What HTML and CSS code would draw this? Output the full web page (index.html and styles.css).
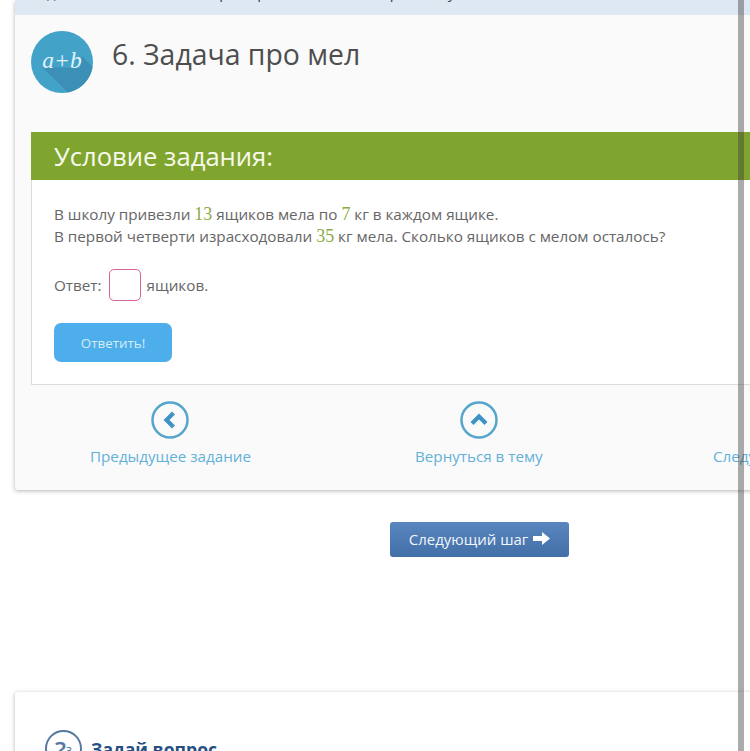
FILE: index.html
```html
<!DOCTYPE html>
<html lang="ru">

<head>
    <meta charset="UTF-8">
    <meta name="viewport" content="width=device-width, initial-scale=1.0">
    <title>Задача про мел</title>
    <link rel="stylesheet" href="styles.css">
</head>

<body>

    <div class="page">
        <!-- Task card -->
        <div class="card">
            <div class="top-band">
                <p>Задание составлено как пример к этой теме, все работы у нас.</p>
            </div>

            <div class="task-head">
                <svg class="task-logo" width="62" height="62" viewBox="0 0 62 62">
                    <circle cx="31" cy="31" r="31" fill="#42a2c8"></circle>
                    <path d="M11 36 L37 61.4 A31 31 0 0 0 61.6 36 L51 25 L49 37 Z" fill="#3c8fb6"></path>
                    <text class="logo-text" x="31" y="37" text-anchor="middle">a+b</text>
                </svg>
                <h1>6. Задача про мел</h1>
            </div>

            <div class="task-box">
                <h2>Условие задания:</h2>
                <div class="task-body">
                    <p>В школу привезли <span class="num">13</span> ящиков мела по <span class="num">7</span> кг в каждом ящике.<br>
                        В первой четверти израсходовали <span class="num">35</span> кг мела. Сколько ящиков с мелом осталось?</p>
                    <div class="answer-row">
                        <span>Ответ:</span>
                        <input class="answer-input" type="text">
                        <span>ящиков.</span>
                    </div>
                    <button class="answer-btn" type="button">Ответить!</button>
                </div>
            </div>

            <div class="task-nav">
                <a class="nav-link nav-prev" href="#">
                    <svg width="38" height="38" viewBox="0 0 38 38">
                        <circle cx="19" cy="19" r="17.5" fill="none" stroke="#56a5cb" stroke-width="2.5"></circle>
                        <path d="M22.5 12 L15.5 19 L22.5 26" fill="none" stroke="#3f93c4" stroke-width="4.2"></path>
                    </svg>
                    Предыдущее задание
                </a>
                <a class="nav-link nav-up" href="#">
                    <svg width="38" height="38" viewBox="0 0 38 38">
                        <circle cx="19" cy="19" r="17.5" fill="none" stroke="#56a5cb" stroke-width="2.5"></circle>
                        <path d="M12 22.5 L19 15.5 L26 22.5" fill="none" stroke="#3f93c4" stroke-width="4.2"></path>
                    </svg>
                    Вернуться в тему
                </a>
                <a class="nav-link nav-next" href="#">
                    <svg width="38" height="38" viewBox="0 0 38 38">
                        <circle cx="19" cy="19" r="17.5" fill="none" stroke="#56a5cb" stroke-width="2.5"></circle>
                        <path d="M15.5 12 L22.5 19 L15.5 26" fill="none" stroke="#3f93c4" stroke-width="4.2"></path>
                    </svg>
                    Следующее задание
                </a>
            </div>
        </div>

        <div class="next-step">
            <button class="next-btn" type="button">
                Следующий шаг
                <svg width="17" height="13" viewBox="0 0 17 13">
                    <path d="M0 4 H9 V0 L17 6.5 L9 13 V9 H0 Z" fill="#ffffff"></path>
                </svg>
            </button>
        </div>

        <!-- Question card -->
        <div class="card question-card">
            <div class="question-head">
                <span class="question-icon">?<small>з</small></span>
                <h3>Задай вопрос</h3>
            </div>
        </div>
    </div>

    <div class="scrollbar"></div>

</body>

</html>
```

FILE: styles.css
```css
html, body {
    margin: 0;
    padding: 0;
    height: 751px;
    overflow: hidden;
    background-color: #ffffff;
}

body {
    font-family: 'Open Sans', sans-serif;
    color: #555555;
    position: relative;
}

.page {
    width: 1000px;
    margin-left: 15px;
}

.card {
    background-color: #fafafa;
    border-radius: 3px;
    box-shadow: 0 1px 4px rgba(0, 0, 0, 0.3);
}

.top-band {
    height: 15px;
    background-color: #dde8f3;
    overflow: hidden;
    position: relative;
}

.top-band p {
    margin: -18px 0 0 15px;
    font-size: 15px;
    line-height: 20px;
    color: #444444;
    white-space: nowrap;
}

.task-head {
    display: flex;
    align-items: flex-start;
    padding: 16px 0 0 16px;
    height: 101px;
}

.task-logo {
    flex: none;
}

.logo-text {
    font-family: 'Liberation Serif', serif;
    font-style: italic;
    font-size: 23.5px;
    fill: #e4f2f8;
}

h1 {
    margin: 0 0 0 19px;
    font-size: 28.4px;
    font-weight: 400;
    line-height: 46px;
    color: #4e4e4e;
}

.task-box {
    margin-left: 16px;
    background-color: #ffffff;
    border: 1px solid #dcdcdc;
    border-top: none;
}

h2 {
    margin: 0 0 0 -1px;
    height: 48px;
    padding-left: 23px;
    background-color: #80a52f;
    color: #f6f9ec;
    font-size: 25.6px;
    font-weight: 400;
    line-height: 49px;
}

.task-body {
    padding: 23px 22px 22px;
    font-size: 15.25px;
    line-height: 22px;
    color: #666666;
}

.task-body p {
    margin: 0;
}

.num {
    font-family: 'Liberation Serif', serif;
    font-size: 18px;
    color: #8bab45;
}

.answer-row {
    display: flex;
    align-items: center;
    gap: 6px;
    margin-top: 22px;
}

.answer-input {
    width: 32px;
    height: 32px;
    box-sizing: border-box;
    margin-left: 1px;
    padding: 0;
    background-color: #ffffff;
    border: 1.5px solid #d5659b;
    border-radius: 5px;
}

.answer-btn {
    display: block;
    width: 118px;
    height: 39px;
    margin-top: 22px;
    padding: 0;
    background-color: #4daeeb;
    color: #d5ecf9;
    border: none;
    border-radius: 7px;
    font-family: 'Open Sans', sans-serif;
    font-size: 13.4px;
}

.task-nav {
    position: relative;
    height: 105px;
}

.nav-link {
    position: absolute;
    top: 16px;
    display: flex;
    flex-direction: column;
    align-items: center;
    gap: 6px;
    font-size: 15.2px;
    font-weight: 500;
    line-height: 22px;
    color: #62b1d8;
    text-decoration: none;
    white-space: nowrap;
}

.nav-prev {
    left: 75px;
}

.nav-up {
    left: 400px;
}

.nav-next {
    left: 698px;
}

.next-step {
    margin-top: 32px;
    padding-left: 375px;
}

.next-btn {
    display: flex;
    align-items: center;
    justify-content: center;
    gap: 5px;
    width: 179px;
    height: 35px;
    padding: 0 0 2px;
    border: none;
    border-radius: 3px;
    background: linear-gradient(#5a86bf, #416fa6);
    color: #f2f5fa;
    font-family: 'Open Sans', sans-serif;
    font-size: 15px;
}

.question-card {
    margin-top: 135px;
    height: 120px;
    background-color: #ffffff;
    overflow: hidden;
}

.question-head {
    display: flex;
    align-items: center;
    gap: 9px;
    padding: 38px 0 0 30px;
}

.question-icon {
    width: 33px;
    height: 33px;
    flex: none;
    border: 2px solid #55799f;
    border-radius: 50%;
    color: #55799f;
    font-size: 24px;
    font-weight: 600;
    line-height: 34px;
    text-align: center;
}

.question-icon small {
    font-size: 13px;
    font-weight: 400;
    vertical-align: 5px;
}

h3 {
    margin: 0;
    font-size: 17.6px;
    font-weight: 700;
    color: #274f84;
}

.scrollbar {
    position: absolute;
    top: 0;
    bottom: 0;
    left: 738px;
    width: 6px;
    background-color: rgba(60, 60, 60, 0.43);
}
```
